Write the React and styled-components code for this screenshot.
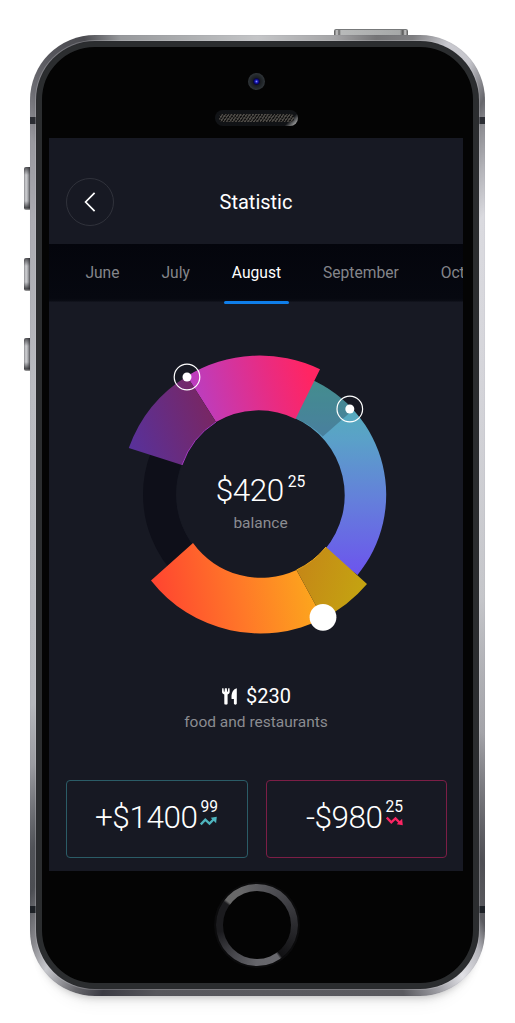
import React from "react";
import styled, { createGlobalStyle } from "styled-components";

const GlobalStyle = createGlobalStyle`
  * { box-sizing: border-box; }
  body { margin: 0; background: #fff; font-family: Roboto, "Liberation Sans", sans-serif; overflow: hidden; }
`;

const Stage = styled.main`
  width: 515px;
  height: 1023px;
  padding: 29px 30px 0 24px;
  overflow: hidden;
`;

const PowerButton = styled.div`
  width: 74px;
  height: 6px;
  margin-left: 310px;
  border-radius: 2px 2px 0 0;
  border-top: 1px solid #77797a;
  background: linear-gradient(90deg, #555 0, #ccc 3px, #666 5px, #b8baba 7px, #a6a8a8 66px, #555 69px, #ccc 71px, #555 74px);
`;

const Device = styled.div`
  display: flex;
  align-items: flex-start;
`;

const SideKeys = styled.div`
  width: 6px;
  flex: none;
  padding-top: 132px;
`;

const SideKey = styled.div`
  height: ${(p) => p.$height}px;
  margin-bottom: ${(p) => p.$gap}px;
  border-radius: 2px 0 0 2px;
  background:
    linear-gradient(180deg, rgba(40, 40, 44, 0.75) 0, transparent 8px, transparent calc(100% - 9px), rgba(40, 40, 44, 0.8) calc(100% - 2px), #aaa 100%),
    linear-gradient(90deg, #8c8c90 0, #d2d3d6 2px, #a4a5a9 4px, #55565a 6px);
`;

const Frame = styled.div`
  width: 455px;
  height: 961px;
  padding: 7px 7px 8px;
  border-radius: 65px;
  background:
    linear-gradient(180deg, transparent 82px, #2b2d33 82px, #2b2d33 89px, transparent 89px, transparent 871px, #1d2126 871px, #1d2126 878px, transparent 878px),
    conic-gradient(
      #c4c5c7 0deg, #a5a5a7 9deg, #747476 14deg, #7e7e81 18deg, #c9c9cf 22deg, #c6c6cc 25deg,
      #67676c 28.5deg, #8d8d92 30deg, #b4b4b9 33deg, #dadadf 37deg, #d4d4d9 60deg, #c5c6ca 110deg,
      #a4a4a9 134deg, #77777c 141deg, #4f4f54 147deg, #5b5b60 151deg, #b4b4ba 153deg, #e1e1e6 156deg,
      #a0a0a6 159deg, #5a5a5f 163deg, #59595e 180deg, #56565b 192deg, #3b3b43 198deg, #66666b 201deg,
      #c7c8cd 205deg, #8b8b90 207.5deg, #4c4e53 211deg, #505257 214deg, #9b9ca1 222deg, #b6b8bd 230deg,
      #babcc1 300deg, #acacb2 323deg, #99999f 329deg, #6e6e74 332deg, #55555b 336deg, #4b4b50 340deg,
      #97999c 344deg, #a8aaac 350deg, #c4c5c7 360deg
    );
  box-shadow:
    inset 0 0 1px 0 rgba(80, 80, 86, 0.35),
    0 9px 10px -9px rgba(0, 0, 0, 0.3),
    0 22px 18px -16px rgba(0, 0, 0, 0.06);
`;

const Face = styled.div`
  display: flex;
  flex-direction: column;
  align-items: center;
  height: 946px;
  padding-right: 2px;
  border: 5px solid #2b2d2f;
  border-radius: 58px;
  background: #040404;
  box-shadow: 0 0 0 1px #2a2b2e, 0 0 0 2px rgba(205, 205, 210, 0.3);
`;

const Camera = styled.div`
  width: 17px;
  height: 17px;
  margin-top: 26px;
  flex: none;
  border-radius: 50%;
  background: radial-gradient(circle, #8890ff 0, #1413b5 1.5px, #08083c 3px, #1b1e21 4px, #22272b 6px, #33383c 9px);
`;

const Speaker = styled.div`
  width: 83px;
  height: 16px;
  margin-top: 20px;
  margin-bottom: 12px;
  flex: none;
  padding: 4px;
  border-radius: 8px;
  background: linear-gradient(135deg, #111316 0 86%, #a7a7a7 96%);
`;

const Mesh = styled.div`
  height: 8px;
  border-radius: 4px;
  background:
    repeating-linear-gradient(125deg, rgba(100, 97, 92, 0.65) 0 1px, transparent 1.5px 2.5px),
    repeating-linear-gradient(35deg, #2b2926 0 1px, #111 1px 2.5px);
`;

const Screen = styled.section`
  width: 414px;
  height: 733px;
  flex: none;
  align-self: flex-start;
  margin-left: 7px;
  overflow: hidden;
  background: #171923;
  color: #fff;
`;

const Header = styled.header`
  display: grid;
  grid-template-columns: 48px 1fr 48px;
  align-items: center;
  height: 106px;
  padding: 22px 17px 0;
`;

const BackButton = styled.button`
  display: grid;
  place-items: center;
  width: 48px;
  height: 48px;
  padding: 0 1px 0 0;
  border: 1px solid #30323b;
  border-radius: 50%;
  background: transparent;
`;

const Title = styled.h1`
  margin: 0;
  text-align: center;
  font-size: 20px;
  font-weight: 400;
  line-height: 24px;
`;

const Months = styled.nav`
  display: flex;
  gap: 26px;
  height: 60px;
  padding-left: 28.4px;
  background: linear-gradient(180deg, #04050c 0, #060810 54px, #0a0c14 57px, #171923 58px);
`;

const Month = styled.a`
  flex: none;
  height: 60px;
  padding: 0 8px;
  color: ${(p) => (p.$active ? "#fff" : "#84858a")};
  font-size: 15.6px;
  font-weight: 400;
  line-height: 58px;
  &::after {
    content: "";
    display: block;
    height: 3px;
    margin: -1px -8px 0;
    border-radius: 2px;
    background: ${(p) => (p.$active ? "#0f7ee9" : "transparent")};
  }
`;

const ChartArea = styled.div`
  display: grid;
  height: 340px;
  > * { grid-area: 1 / 1; }
`;

const Balance = styled.div`
  padding-top: 167px;
  padding-left: 9px;
  text-align: center;
`;

const Amount = styled.div`
  display: flex;
  justify-content: center;
  align-items: flex-start;
  font-size: 31.5px;
  letter-spacing: -0.45px;
  font-weight: 300;
  line-height: 40px;
  white-space: nowrap;
`;

const CentsColumn = styled.span`
  display: flex;
  flex-direction: column;
  align-items: flex-start;
  gap: ${(p) => p.$gap || 0}px;
  padding-left: ${(p) => p.$inset}px;
  padding-top: ${(p) => p.$drop || 0}px;
  letter-spacing: 0;
`;

const Cents = styled.span`
  font-size: 15.6px;
  font-weight: 400;
  line-height: 18px;
`;

const Caption = styled.div`
  color: #8b8c91;
  font-size: 15.5px;
  line-height: 20px;
  padding-top: ${(p) => p.$drop || 0}px;
`;

const Category = styled.div`
  padding: 40px 0 0 0;
  height: 136px;
  text-align: center;
`;

const CategoryValue = styled.div`
  display: flex;
  justify-content: center;
  align-items: center;
  gap: 8px;
  margin-bottom: 4px;
  padding-left: 1px;
  font-size: 20px;
  line-height: 24px;
`;

const Totals = styled.div`
  display: grid;
  grid-template-columns: 1fr 1fr;
  gap: 18px;
  padding: 0 16px 0 17px;
`;

const Total = styled.div`
  height: 78px;
  padding-top: 17px;
  padding-right: ${(p) => p.$shift || 0}px;
  border: 1px solid ${(p) => p.$color};
  border-radius: 4px;
`;

const HomeButton = styled.div`
  width: 82px;
  height: 82px;
  margin-top: 13px;
  flex: none;
  padding: 7px;
  border-radius: 50%;
  box-shadow: 0 0 0 2px #0b0b0c;
  background: conic-gradient(#5b5b5f 0deg, #4c4c51 30deg, #2b2b2f 90deg, #111113 142deg, #68686d 146deg, #66666b 180deg, #4a4a4f 215deg, #1b1b1e 260deg, #1b1b1e 305deg, #686868 309deg, #686869 335deg, #5b5b5f 360deg);
`;

const HomeCenter = styled.div`
  height: 68px;
  border-radius: 50%;
  background: #040404;
`;

const center = { x: 211, y: 190.5 };

const pt = (dx, dy) => `${center.x + dx} ${center.y + dy}`;

const slice = (outer, inner, o1, o2, i2, i1) =>
  `M${pt(...o1)} A${outer} ${outer} 0 0 1 ${pt(...o2)} L${pt(...i2)} A${inner} ${inner} 0 0 0 ${pt(...i1)} Z`;

function Knob({ x, y }) {
  return (
    <g>
      <circle cx={x} cy={y} r="12.8" fill="none" stroke="#fff" strokeWidth="1.2" />
      <circle cx={x} cy={y} r="4.5" fill="#fff" />
    </g>
  );
}

function Donut() {
  return (
    <svg width="414" height="340" viewBox="0 0 414 340">
      <defs>
        <linearGradient id="pink" gradientUnits="userSpaceOnUse" x1="140" y1="110" x2="262" y2="80">
          <stop offset="0" stopColor="#b540c8" />
          <stop offset="0.7" stopColor="#ea2b80" />
          <stop offset="1" stopColor="#ff2563" />
        </linearGradient>
        <linearGradient id="purple" gradientUnits="userSpaceOnUse" x1="80" y1="140" x2="160" y2="112">
          <stop offset="0" stopColor="#58319a" />
          <stop offset="1" stopColor="#772766" />
        </linearGradient>
        <linearGradient id="blue" gradientUnits="userSpaceOnUse" x1="0" y1="77" x2="0" y2="270">
          <stop offset="0" stopColor="#52b5b2" />
          <stop offset="0.3" stopColor="#5aa1c8" />
          <stop offset="0.62" stopColor="#647fdb" />
          <stop offset="1" stopColor="#6c55ed" />
        </linearGradient>
        <linearGradient id="orange" gradientUnits="userSpaceOnUse" x1="104" y1="275" x2="270" y2="245">
          <stop offset="0" stopColor="#ff4530" />
          <stop offset="0.5" stopColor="#ff7928" />
          <stop offset="1" stopColor="#fcae1b" />
        </linearGradient>
        <linearGradient id="gold" gradientUnits="userSpaceOnUse" x1="248" y1="262" x2="318" y2="280">
          <stop offset="0" stopColor="#c58717" />
          <stop offset="1" stopColor="#c4a411" />
        </linearGradient>
      </defs>
      <circle cx={center.x} cy={center.y} r="100.5" fill="none" stroke="#0e0f19" strokeWidth="33" />
      <circle cx={center.x + 0.7} cy={center.y} r="84.3" fill="#171923" />
      <path d={slice(126.2, 84.5, [50, -115.6], [97.5, 80.4], [64.5, 55.5], [33.5, -77])} fill="url(#blue)" />
      <path d={slice(126.2, 84.5, [50, -115.6], [93.5, -85], [62.8, -58], [33.5, -77])} fill="#171923" fillOpacity="0.25" />
      <path d={slice(139, 83.5, [-73, -118.3], [60, -125.2], [35.5, -75.5], [-44, -72.5])} fill="url(#pink)" />
      <path d={slice(139, 83.5, [-131.2, -46.5], [-73, -118.3], [-44, -72.5], [-78, -29.5])} fill="url(#purple)" />
      <path d={`M${pt(-78, -29.5)} A83.5 83.5 0 0 1 ${pt(-44, -72.5)}`} fill="none" stroke="#a63bc4" />
      <path
        d={`M${pt(63, 124)} A139 139 0 0 1 ${pt(-109, 86)} L${pt(-67, 48.5)} A84 84 0 0 0 ${pt(36.5, 75.5)} Z`}
        fill="url(#orange)"
      />
      <path
        d={`M${pt(107, 89.5)} A139 139 0 0 1 ${pt(63, 124)} L${pt(36.5, 75.5)} A83.5 83.5 0 0 0 ${pt(66, 52.5)} Z`}
        fill="url(#gold)"
      />
      <path d={`M${pt(36.5, 75.5)} A83.5 83.5 0 0 0 ${pt(66, 52.5)}`} fill="none" stroke="#eaa31b" />
      <Knob x={138} y={73} />
      <Knob x={300.8} y={105} />
      <circle cx="274" cy="313.3" r="13.4" fill="#fff" />
    </svg>
  );
}

function BackIcon() {
  return (
    <svg width="12" height="20" viewBox="0 0 12 20">
      <path d="M10.6 0.8 L1.6 10 L10.6 19.2" fill="none" stroke="#fff" strokeWidth="1.7" />
    </svg>
  );
}

function FoodIcon() {
  return (
    <svg width="16" height="17" viewBox="0 0 16 17">
      <path
        fill="#fff"
        d="M0.2 0.3h1.3l.4 3.4h.6L2.9.3h1.9l.4 3.4h.6L6.2.3h1.3l.2 3.500c0 1.500-.9 2.100-2.100 2.800v9c0 1.600-3.300 1.600-3.300 0v-9C.9 5.900 0 5.300 0 3.800Z M14.800.2v15.400c0 1.500-2.900 1.500-2.900 0v-4.700H9.600C9 6 10.800.9 14.800.2Z"
      />
    </svg>
  );
}

function TrendIcon({ down, color }) {
  return (
    <svg width="18" height="10" viewBox="0 0 18 10">
      <g transform={down ? "translate(0 10) scale(1 -1)" : undefined}>
        <path d="M0.8 8.4 L5.3 3.7 L9.5 7.6 L14 3" fill="none" stroke={color} strokeWidth="2.3" />
        <path d="M10.7 1.7 L16.8 .8 L16.1 7.2 Z" fill={color} />
      </g>
    </svg>
  );
}

const months = ["June", "July", "August", "September", "Oct"];

export default function App() {
  return (
    <>
      <GlobalStyle />
      <Stage>
        <PowerButton />
        <Device>
          <SideKeys>
            <SideKey $height={43} $gap={48} />
            <SideKey $height={33} $gap={47} />
            <SideKey $height={33} $gap={0} />
          </SideKeys>
          <Frame>
            <Face>
              <Camera />
              <Speaker>
                <Mesh />
              </Speaker>
              <Screen>
                <Header>
                  <BackButton aria-label="Back">
                    <BackIcon />
                  </BackButton>
                  <Title>Statistic</Title>
                </Header>
                <Months>
                  {months.map((m) => (
                    <Month key={m} $active={m === "August"}>{m}</Month>
                  ))}
                </Months>
                <ChartArea>
                  <Donut />
                  <Balance>
                    <Amount>
                      $420
                      <CentsColumn $inset={4} $drop={2}>
                        <Cents>25</Cents>
                      </CentsColumn>
                    </Amount>
                    <Caption $drop={2}>balance</Caption>
                  </Balance>
                </ChartArea>
                <Category>
                  <CategoryValue>
                    <FoodIcon />
                    $230
                  </CategoryValue>
                  <Caption>food and restaurants</Caption>
                </Category>
                <Totals>
                  <Total $color="#2b5c67">
                    <Amount>
                      +$1400
                      <CentsColumn $inset={3}>
                        <Cents>99</Cents>
                        <TrendIcon color="#4fb5bf" />
                      </CentsColumn>
                    </Amount>
                  </Total>
                  <Total $color="#7c1e46" $shift={3}>
                    <Amount>
                      -$980
                      <CentsColumn $inset={3}>
                        <Cents>25</Cents>
                        <TrendIcon down color="#fb2563" />
                      </CentsColumn>
                    </Amount>
                  </Total>
                </Totals>
              </Screen>
              <HomeButton>
                <HomeCenter />
              </HomeButton>
            </Face>
          </Frame>
        </Device>
      </Stage>
    </>
  );
}
